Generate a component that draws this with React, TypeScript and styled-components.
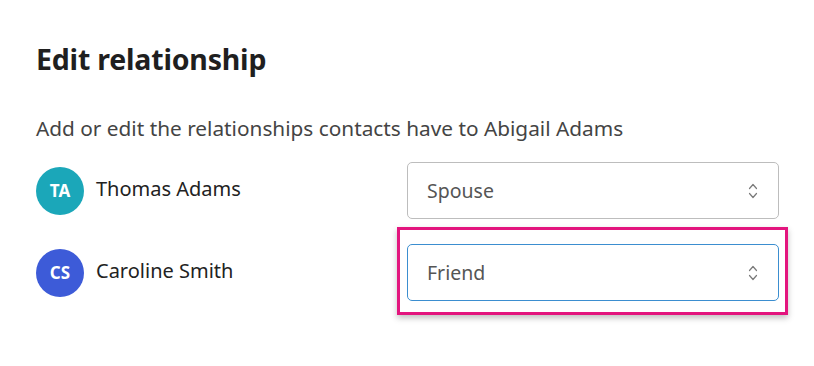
import React from "react";
import styled, { createGlobalStyle } from "styled-components";

const Global = createGlobalStyle`
  html, body { margin: 0; padding: 0; background: #ffffff; }
  body { font-family: "Noto Sans", "Open Sans", sans-serif; }
`;

const Page = styled.div`
  width: 814px;
  height: 366px;
  box-sizing: border-box;
  padding: 38px 35px 0 36px;
  background: #fff;
`;

const Title = styled.h1`
  margin: 0;
  font-size: 28.5px;
  line-height: 42px;
  font-weight: 700;
  color: #1f1f1f;
  letter-spacing: -0.2px;
`;

const Subtitle = styled.p`
  margin: 34px 0 0 0;
  font-size: 20.8px;
  line-height: 28px;
  color: #444;
`;

const List = styled.div`
  margin-top: 20px;
  display: grid;
  grid-template-columns: 371px 372px;
  row-gap: 25px;
`;

const Person = styled.div`
  display: flex;
  align-items: center;
  gap: 12px;
  height: 57px;
  box-sizing: border-box;
`;

const Avatar = styled.div<{ $bg: string }>`
  width: 48px;
  height: 48px;
  border-radius: 50%;
  background: ${(p) => p.$bg};
  color: #fff;
  display: flex;
  align-items: center;
  justify-content: center;
  font-size: 17px;
  font-weight: 700;
  flex: none;
`;

const Name = styled.span`
  font-size: 20px;
  color: #222;
  margin-top: -5px;
`;

const SelectWrap = styled.div`
  position: relative;
  height: 57px;
`;

const Select = styled.div<{ $focused?: boolean }>`
  height: 100%;
  box-sizing: border-box;
  border: 1px solid ${(p) => (p.$focused ? "#3b8ed0" : "#bdbdbd")};
  border-radius: 5px;
  display: flex;
  align-items: center;
  justify-content: space-between;
  padding: 0 20px 0 19px;
  font-size: 19.5px;
  color: #555;
  background: #fff;
`;

const Highlight = styled.div`
  position: absolute;
  top: -17px;
  bottom: -14px;
  left: -10px;
  right: -9px;
  border: 3px solid #e3157e;
  box-shadow: 0 3px 6px rgba(0, 0, 0, 0.25);
  pointer-events: none;
`;

const Chevrons = () => (
  <svg width="10" height="18" viewBox="0 0 10 18" fill="none" stroke="#7a7a7a" strokeWidth="1.2" strokeLinecap="round" strokeLinejoin="round">
    <path d="M1.5 6.5 L5 2.5 L8.5 6.5" />
    <path d="M1.5 11.5 L5 15.5 L8.5 11.5" />
  </svg>
);

const people = [
  { initials: "TA", name: "Thomas Adams", color: "#1ba7b9", relation: "Spouse", focused: false },
  { initials: "CS", name: "Caroline Smith", color: "#3d5bd8", relation: "Friend", focused: true },
];

export default function App() {
  return (
    <>
      <Global />
      <Page>
        <Title>Edit relationship</Title>
        <Subtitle>Add or edit the relationships contacts have to Abigail Adams</Subtitle>
        <List>
          {people.map((p) => (
            <React.Fragment key={p.initials}>
              <Person>
                <Avatar $bg={p.color}>{p.initials}</Avatar>
                <Name>{p.name}</Name>
              </Person>
              <SelectWrap>
                {p.focused && <Highlight />}
                <Select $focused={p.focused}>
                  <span>{p.relation}</span>
                  <Chevrons />
                </Select>
              </SelectWrap>
            </React.Fragment>
          ))}
        </List>
      </Page>
    </>
  );
}
